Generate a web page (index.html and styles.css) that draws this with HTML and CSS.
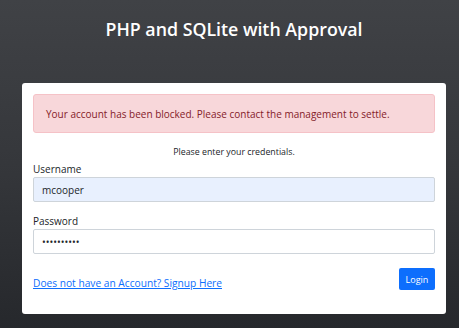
FILE: index.html
```html
<!DOCTYPE html>
<html lang="en">
<head>
    <meta charset="UTF-8">
    <meta name="viewport" content="width=device-width, initial-scale=1.0">
    <title>PHP and SQLite with Approval</title>
    <link rel="stylesheet" href="styles.css">
</head>
<body>
    <div class="wrapper">
        <h1 class="page-title">PHP and SQLite with Approval</h1>

        <div class="card">
            <div class="alert">Your account has been blocked. Please contact the management to settle.</div>

            <p class="hint">Please enter your credentials.</p>

            <form class="login-form" onsubmit="return false;">
                <label for="username">Username</label>
                <input type="text" id="username" class="field filled" value="mcooper">

                <label for="password">Password</label>
                <input type="password" id="password" class="field" value="mcooper123">

                <div class="form-footer">
                    <a href="#" class="signup-link">Does not have an Account? Signup Here</a>
                    <button type="submit" class="btn-login">Login</button>
                </div>
            </form>
        </div>
    </div>
</body>
</html>
```

FILE: styles.css
```css
html, body {
    height: 100%;
}
body {
    margin: 0;
    padding: 0;
    font-family: "Open Sans", "Noto Sans", sans-serif;
    background: linear-gradient(to bottom, #404246 0%, #35373b 50%, #26282c 100%);
    color: #212529;
}
.wrapper {
    width: 424px;
    margin-left: 22px;
    padding-top: 17px;
}
.page-title {
    margin: 0;
    text-align: center;
    color: #fff;
    font-size: 17.8px;
    font-weight: 600;
    line-height: 24px;
}
.card {
    margin-top: 42px;
    background: #fff;
    border-radius: 3px;
    padding: 11px 11px 24px 11px;
}
.alert {
    background: #f8d7da;
    border: 1px solid #f5c2c7;
    border-radius: 3px;
    color: #842029;
    font-size: 10px;
    line-height: 14px;
    padding: 12px 12px 11px 12px;
}
.hint {
    margin: 13px 0 4px 0;
    text-align: center;
    font-size: 8.8px;
    line-height: 12px;
}
.login-form label {
    display: block;
    font-size: 10px;
    line-height: 14px;
}
.field {
    display: block;
    box-sizing: border-box;
    width: 100%;
    height: 25px;
    margin: 1px 0 12px 0;
    padding: 0 8px;
    border: 1px solid #ced4da;
    border-radius: 2px;
    font-family: inherit;
    font-size: 10px;
    color: #212529;
    background: #fff;
    outline: none;
}
.field.filled {
    background: #e8f0fe;
}
.form-footer {
    display: flex;
    align-items: flex-end;
    justify-content: space-between;
    margin-top: 14px;
}
.signup-link {
    color: #0d6efd;
    font-size: 10.2px;
    line-height: 14px;
}
.btn-login {
    width: 36px;
    height: 22px;
    padding: 0;
    border: none;
    border-radius: 2px;
    background: #0d6efd;
    color: #fff;
    font-family: inherit;
    font-size: 9px;
    cursor: pointer;
}
```
